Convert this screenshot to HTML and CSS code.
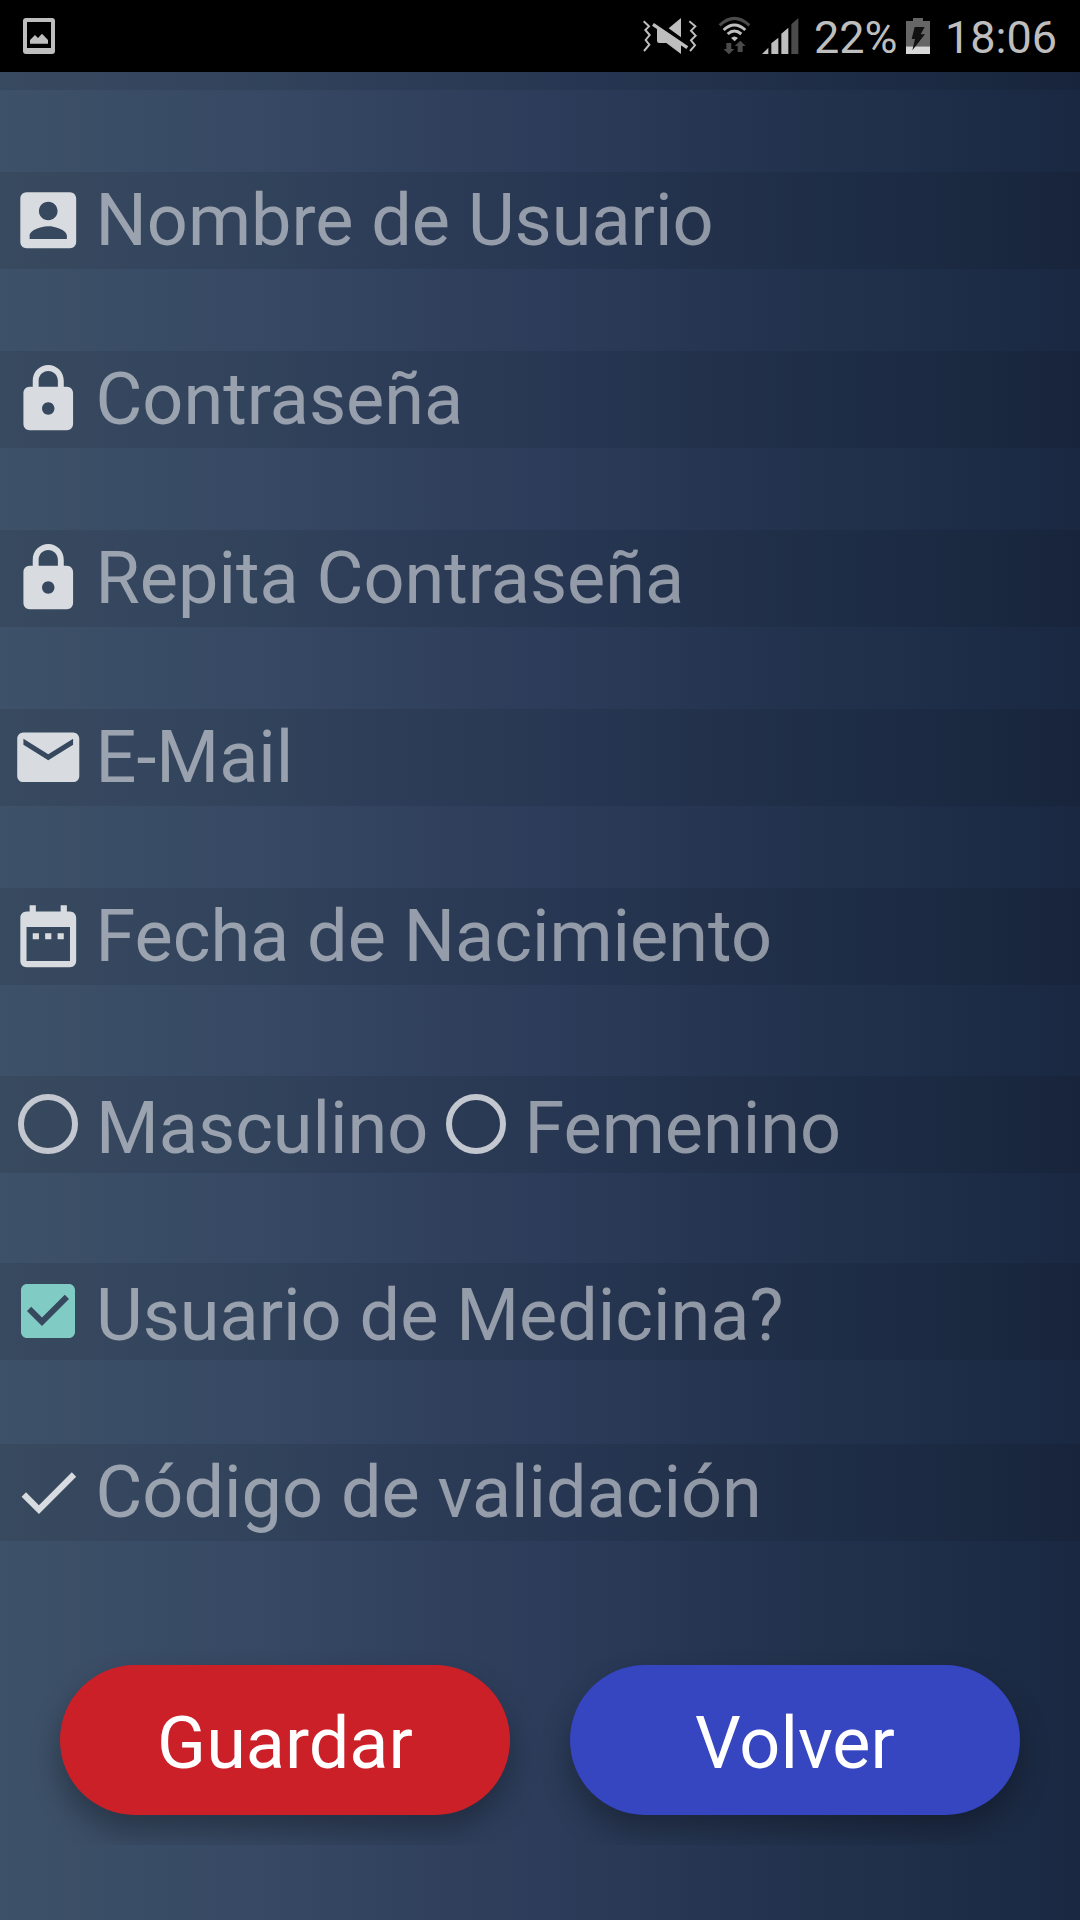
FILE: index.html
```html
<!DOCTYPE html>
<html lang="es">
<head>
<meta charset="utf-8">
<title>Registro</title>
<link rel="stylesheet" href="styles.css">
</head>
<body>
<div class="screen">
  <header class="status">
    <svg class="s-picture" viewBox="69 54 96 108"><path fill-rule="evenodd" d="M78 54h78q9 0 9 9v90q0 9-9 9H78q-9 0-9-9V63q0-9 9-9zm3 12v78h72V66zM90 131v-11l15-15 9 9 12-13 18 19v11z"/></svg>
    <div class="tray">
      <svg class="s-mute" viewBox="66 51 168 114">
        <path class="zig" d="M71 64L87 79 76 90 89 105 77 120 88 134 72 153M208 64L226 79 213 92 227 107 213 121 225 136 210 153"/>
        <path d="M183 54v58l-37-27zM111 80l72 50v32l-44-33h-21q-7 0-7-7z"/>
        <path class="slash" d="M99 73L202 143"/>
      </svg>
      <svg class="s-wifi" viewBox="294 48 100 117">
        <path class="arc dim" d="M299 76Q343 34 388 76"/>
        <path class="arc" d="M311 90Q343 60 376 90M323 102Q343 84 364 102"/>
        <path d="M333 114q10-9 21 0l-10 10z"/>
        <path class="dimf" d="M319 129h15v18h9l-16 16-17-16h9zM353 156v-18h-9l17-16 16 16h-9v18z"/>
      </svg>
      <svg class="s-signal" viewBox="428 54 110 108">
        <path d="M428 162l19-19v19zM456 162v-32l21-17v49zM486 162V101l21-18v79z"/><path class="dimf" d="M516 162V73l21-19v108z"/>
      </svg>
      <span class="battery-text">22%</span>
      <svg class="s-battery" viewBox="858 54 72 108">
        <path class="dimb" d="M858 63h21v-9h30v9h21v76h-72z"/><path class="full" d="M858 139h72v23h-72z"/>
        <path class="bolt" d="M884 81h30l-12 22h13l-38 48 8-34h-10z"/>
      </svg>
      <span class="clock">18:06</span>
    </div>
  </header>
  <main class="form">
    <div class="row row-cut"></div>
    <label class="row"><svg class="icon" viewBox="0 0 24 24"><path d="M3 5v14c0 1.1.89 2 2 2h14c1.1 0 2-.9 2-2V5c0-1.1-.9-2-2-2H5c-1.11 0-2 .9-2 2zm12 4c0 1.66-1.34 3-3 3s-3-1.34-3-3 1.34-3 3-3 3 1.34 3 3zm-9 8c0-2 4-3.1 6-3.1s6 1.1 6 3.1v1H6v-1z"/></svg><span>Nombre de Usuario</span></label>
    <label class="row"><svg class="icon" viewBox="0 0 24 24"><path d="M18 8h-1V6c0-2.76-2.24-5-5-5S7 3.24 7 6v2H6c-1.1 0-2 .9-2 2v10c0 1.1.9 2 2 2h12c1.1 0 2-.9 2-2V10c0-1.1-.9-2-2-2zm-6 9c-1.1 0-2-.9-2-2s.9-2 2-2 2 .9 2 2-.9 2-2 2zm3.1-9H8.9V6c0-1.71 1.39-3.1 3.1-3.1 1.71 0 3.1 1.39 3.1 3.1v2z"/></svg><span>Contraseña</span></label>
    <label class="row"><svg class="icon" viewBox="0 0 24 24"><path d="M18 8h-1V6c0-2.76-2.24-5-5-5S7 3.24 7 6v2H6c-1.1 0-2 .9-2 2v10c0 1.1.9 2 2 2h12c1.1 0 2-.9 2-2V10c0-1.1-.9-2-2-2zm-6 9c-1.1 0-2-.9-2-2s.9-2 2-2 2 .9 2 2-.9 2-2 2zm3.1-9H8.9V6c0-1.71 1.39-3.1 3.1-3.1 1.71 0 3.1 1.39 3.1 3.1v2z"/></svg><span>Repita Contraseña</span></label>
    <label class="row"><svg class="icon" viewBox="0 0 24 24"><path d="M20 4H4c-1.1 0-1.99.9-1.99 2L2 18c0 1.1.9 2 2 2h16c1.1 0 2-.9 2-2V6c0-1.1-.9-2-2-2zm0 4l-8 5-8-5V6l8 5 8-5v2z"/></svg><span>E-Mail</span></label>
    <label class="row"><svg class="icon" viewBox="0 0 24 24"><path d="M9 11H7v2h2v-2zm4 0h-2v2h2v-2zm4 0h-2v2h2v-2zm2-7h-1V2h-2v2H8V2H6v2H5c-1.11 0-1.99.9-1.99 2L3 20c0 1.1.89 2 2 2h14c1.1 0 2-.9 2-2V6c0-1.1-.9-2-2-2zm0 16H5V9h14v11z"/></svg><span>Fecha de Nacimiento</span></label>
    <div class="row choice sex">
      <label class="option"><i class="radio"></i><span>Masculino</span></label>
      <label class="option"><i class="radio"></i><span>Femenino</span></label>
    </div>
    <div class="row choice medic">
      <label class="option"><svg class="checkbox" viewBox="3 3 18 18"><path d="M19 3H5c-1.11 0-2 .9-2 2v14c0 1.1.89 2 2 2h14c1.11 0 2-.9 2-2V5c0-1.1-.89-2-2-2zm-9 14l-5-5 1.41-1.41L10 14.17l7.59-7.59L19 8l-9 9z"/></svg><span>Usuario de Medicina?</span></label>
    </div>
    <label class="row code"><svg class="icon" viewBox="0 0 24 24"><path d="M9 16.17L4.83 12l-1.42 1.41L9 19 21 7l-1.41-1.41z"/></svg><span>Código de validación</span></label>
    <div class="actions">
      <button class="btn save">Guardar</button>
      <button class="btn back">Volver</button>
    </div>
  </main>
</div>
</body>
</html>
```
FILE: styles.css
```css
* { box-sizing: border-box; }
body { margin: 0; font-family: Roboto, sans-serif; }
.screen { width: 1080px; height: 1920px; overflow: hidden; background: #000; display: flex; flex-direction: column; }
.status { height: 72px; flex: none; padding: 18px 26px 18px 23px; display: flex; justify-content: space-between; align-items: flex-start; color: #bebebe; fill: #bebebe; font-size: 45px; line-height: 40px; }
.status svg { display: block; flex: none; }
.s-picture { width: 32px; height: 36px; }
.tray { display: flex; align-items: flex-start; }
.s-mute { width: 56px; height: 38px; margin: -1px 20px 0 0; }
.zig { fill: none; stroke: #bebebe; stroke-width: 6; }
.slash { stroke: #bebebe; stroke-width: 10; }
.s-wifi { width: 33.3px; height: 39px; margin: -2px 11.3px 0 0; }
.arc { fill: none; stroke: #bebebe; stroke-width: 9; }
.arc.dim { stroke: #4b4b4b; }
.dimf { fill: #4b4b4b; }
.s-signal { width: 36.7px; height: 36px; }
.battery-text { width: 80px; margin-left: 15px; white-space: nowrap; margin-right: 12px; }
.s-battery { width: 24px; height: 36px; }
.dimb { fill: #666; }
.full { fill: #d8d8d8; }
.bolt { fill: #111; }
.clock { width: 109px; margin-left: 15px; white-space: nowrap; }

.form { flex: 1; display: flex; flex-direction: column; background: linear-gradient(90deg, #3d5168, #364863 25%, #2c3c5a 50%, #22324d 75%, #1a2842); }
.row { height: 97px; flex: none; margin-bottom: 82px; padding-left: 10.5px; display: flex; align-items: flex-start; background: rgba(0, 0, 0, .08); color: rgba(255, 255, 255, .5); font-size: 72px; line-height: 86px; white-space: nowrap; }
.row span { margin-top: 6px; }
.row-cut { height: 18px; }
.icon { width: 74.5px; height: 74.5px; margin: 10.5px 10.5px 0 0; fill: #d8dbe0; flex: none; }
.choice { padding-left: 18px; }
.row.choice span { margin-top: 10px; }
.row.sex { margin: 9px 0 90px; }
.row.medic { margin-bottom: 84px; }
.option { display: flex; align-items: flex-start; }
.sex .option + .option { margin-left: 18px; }
.radio { width: 60px; height: 60px; border: 6px solid #c3c7cf; border-radius: 50%; margin: 18px 18px 0 0; }
.checkbox { width: 54px; height: 54px; margin: 21px 21px 0 3px; fill: #80cbc4; }
.row.code { margin-bottom: 0; }
.actions { height: 304px; padding: 124px 60px 0; display: flex; gap: 60px; align-items: flex-start; overflow: hidden; flex: none; }
.btn { width: 450px; height: 150px; border: 0; border-radius: 75px; padding: 8px 0 0; font: 72px/86px Roboto, sans-serif; color: #fff; box-shadow: 0 16px 30px rgba(0, 0, 0, .3); }
.save { background: #cc2029; }
.back { background: #3645c0; }
```
